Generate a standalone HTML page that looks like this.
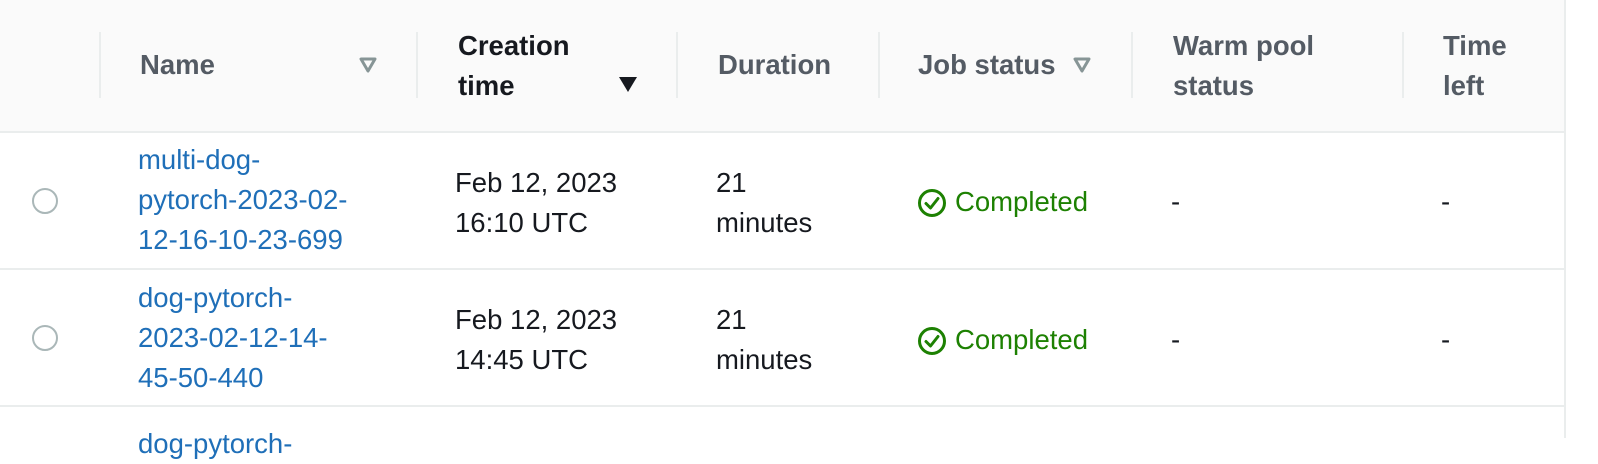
<!DOCTYPE html>
<html><head><meta charset="utf-8"><style>
html,body{margin:0;padding:0;width:1598px;height:438px;overflow:hidden;background:#fff;font-family:"Liberation Sans",sans-serif;}
.hdr{position:absolute;left:0;top:0;width:1565px;height:131px;background:#fafafa;border-bottom:2px solid #eaeded;}
.rb{position:absolute;left:1564px;top:0;width:2px;height:438px;background:#eaeded;}
.sep{position:absolute;top:32px;width:2px;height:66px;background:#eaeded;}
.t{position:absolute;font-size:27.5px;line-height:40px;white-space:nowrap;color:#16191f;}
.h{font-weight:bold;color:#545b64;}
.hb{font-weight:bold;color:#16191f;}
.lnk{color:#1f6fb8;}
.ok{color:#1d8102;}
.line{position:absolute;left:0;width:1565px;height:2px;background:#eaeded;}
.radio{position:absolute;width:26px;height:26px;border:2px solid #aab7b8;border-radius:50%;box-sizing:border-box;background:#fff;}
</style></head><body>
<div class="hdr"></div>
<div class="rb"></div>
<div class="sep" style="left:99px"></div>
<div class="sep" style="left:416px"></div>
<div class="sep" style="left:676px"></div>
<div class="sep" style="left:878px"></div>
<div class="sep" style="left:1131px"></div>
<div class="sep" style="left:1402px"></div>

<div class="t h" style="left:140px;top:45px">Name</div>
<svg style="position:absolute;left:359px;top:57px" width="18" height="16"><path d="M2 2H16L9 14Z" fill="none" stroke="#879596" stroke-width="3" stroke-linejoin="round"/></svg>
<div class="t hb" style="left:458px;top:26px">Creation<br>time</div>
<svg style="position:absolute;left:618px;top:76px" width="20" height="17"><path d="M1 1H19L10 16Z" fill="#16191f"/></svg>
<div class="t h" style="left:718px;top:45px">Duration</div>
<div class="t h" style="left:918px;top:45px">Job status</div>
<svg style="position:absolute;left:1073px;top:57px" width="18" height="16"><path d="M2 2H16L9 14Z" fill="none" stroke="#879596" stroke-width="3" stroke-linejoin="round"/></svg>
<div class="t h" style="left:1173px;top:26px">Warm pool<br>status</div>
<div class="t h" style="left:1443px;top:26px">Time<br>left</div>

<div class="radio" style="left:32px;top:188px"></div>
<div class="t lnk" style="left:138px;top:140px">multi-dog-<br>pytorch-2023-02-<br>12-16-10-23-699</div>
<div class="t" style="left:455px;top:163px">Feb 12, 2023<br>16:10 UTC</div>
<div class="t" style="left:716px;top:163px">21<br>minutes</div>
<svg style="position:absolute;left:917px;top:188px" width="30" height="30"><circle cx="15" cy="15" r="12.5" fill="none" stroke="#1d8102" stroke-width="3"/><path d="M9 15.5L13.5 20L21 10.5" fill="none" stroke="#1d8102" stroke-width="3" stroke-linecap="round" stroke-linejoin="round"/></svg>
<div class="t ok" style="left:955px;top:182px">Completed</div>
<div class="t" style="left:1171px;top:182px">-</div>
<div class="t" style="left:1441px;top:182px">-</div>

<div class="line" style="top:268px"></div>

<div class="radio" style="left:32px;top:325px"></div>
<div class="t lnk" style="left:138px;top:278px">dog-pytorch-<br>2023-02-12-14-<br>45-50-440</div>
<div class="t" style="left:455px;top:300px">Feb 12, 2023<br>14:45 UTC</div>
<div class="t" style="left:716px;top:300px">21<br>minutes</div>
<svg style="position:absolute;left:917px;top:326px" width="30" height="30"><circle cx="15" cy="15" r="12.5" fill="none" stroke="#1d8102" stroke-width="3"/><path d="M9 15.5L13.5 20L21 10.5" fill="none" stroke="#1d8102" stroke-width="3" stroke-linecap="round" stroke-linejoin="round"/></svg>
<div class="t ok" style="left:955px;top:320px">Completed</div>
<div class="t" style="left:1171px;top:320px">-</div>
<div class="t" style="left:1441px;top:320px">-</div>

<div class="line" style="top:405px"></div>
<div class="t lnk" style="left:138px;top:424px">dog-pytorch-</div>
</body></html>
